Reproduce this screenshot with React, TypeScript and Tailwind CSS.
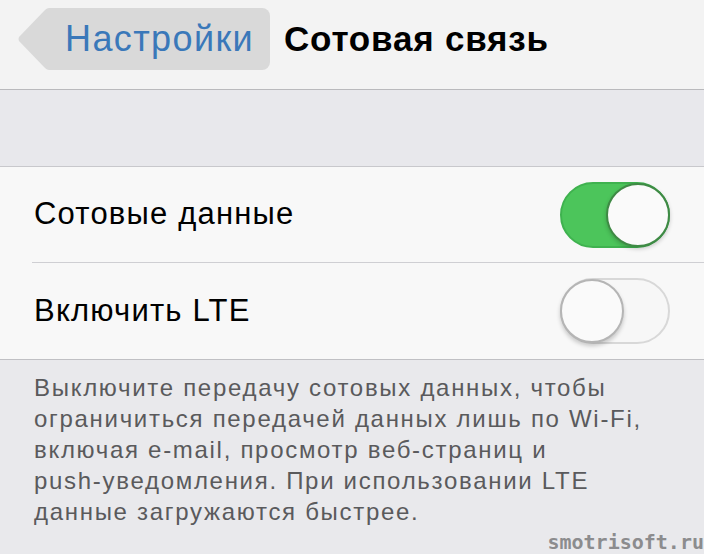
import React from "react";

function Toggle({ on }: { on: boolean }) {
    return (
        <div
            className={`flex h-[66px] w-[110px] items-center rounded-full border-2 ${
                on ? "justify-end border-[#3fb24f] bg-[#4cc55b]" : "justify-start border-[#d8d8d8] bg-[#f7f7f7]"
            }`}
        >
            <div
                className={`h-[64px] w-[64px] shrink-0 rounded-full bg-[#fafafa] ${
                    on ? "-mr-[2px] border-2 border-[#3f8a45] shadow-[0_2px_4px_rgba(0,0,0,0.2)]" : "-ml-[2px] border-2 border-[#b5b5b5] shadow-[0_3px_4px_rgba(0,0,0,0.2)]"
                }`}
            />
        </div>
    );
}

function Row({ label, on, divider }: { label: string; on: boolean; divider?: boolean }) {
    return (
        <div className="pl-[32px]">
            <div className={`flex h-[96px] items-center justify-between pr-[34px] ${divider ? "border-b border-[#cfcfd3]" : ""}`}>
                <span className="pl-[2px] text-[31px] tracking-[1.2px] text-black">{label}</span>
                <Toggle on={on} />
            </div>
        </div>
    );
}

export default function App() {
    return (
        <div className="flex h-[554px] w-[704px] flex-col overflow-hidden bg-[#f7f7f7] font-['Liberation_Sans',Arial,sans-serif]">
            {/* nav bar */}
            <div className="flex h-[90px] shrink-0 items-start border-b border-[#b9b9bc] bg-[#f3f3f3] pl-[18px] pt-[8px]">
                <div className="flex h-[62px] w-[252px] shrink-0 items-stretch">
                    <svg width="33" height="62" viewBox="0 0 33 62" className="shrink-0">
                        <path d="M33 0 L31 0 Q29 0 27 2 L1 29 Q0 31 1 33 L27 60 Q29 62 31 62 L33 62 Z" fill="#d9d9d9" />
                    </svg>
                    <div className="flex flex-1 items-center rounded-r-[8px] bg-[#d9d9d9] pl-[14px]">
                        <span className="text-[36px] tracking-[1.4px] text-[#3a78b9]">Настройки</span>
                    </div>
                </div>
                <div className="flex h-[62px] items-center pl-[14px]">
                    <span className="text-[35px] font-bold tracking-[0.8px] text-black">Сотовая связь</span>
                </div>
            </div>

            {/* spacer band */}
            <div className="h-[77px] shrink-0 border-b border-[#c8c8cc] bg-[#e8e8ec]" />

            {/* switches */}
            <div className="shrink-0 border-b border-[#c0c0c4] bg-[#f8f8f8]">
                <Row label="Сотовые данные" on divider />
                <Row label="Включить LTE" on={false} />
            </div>

            {/* footer note */}
            <div className="relative flex-1 bg-[#e9e9ec] px-[34px] pt-[12px]">
                <p className="text-[24px] leading-[31px] tracking-[1.7px] text-[#5a5a5c]">
                    Выключите передачу сотовых данных, чтобы
                    <br />
                    ограничиться передачей данных лишь по Wi-Fi,
                    <br />
                    включая e-mail, просмотр веб-страниц и
                    <br />
                    push-уведомления. При использовании LTE
                    <br />
                    данные загружаются быстрее.
                </p>
                <span className="absolute bottom-[-3px] right-[0px] font-['DejaVu_Sans_Mono',monospace] text-[20px] font-bold text-[#8c8c8e]">
                    smotrisoft.ru
                </span>
            </div>
        </div>
    );
}
